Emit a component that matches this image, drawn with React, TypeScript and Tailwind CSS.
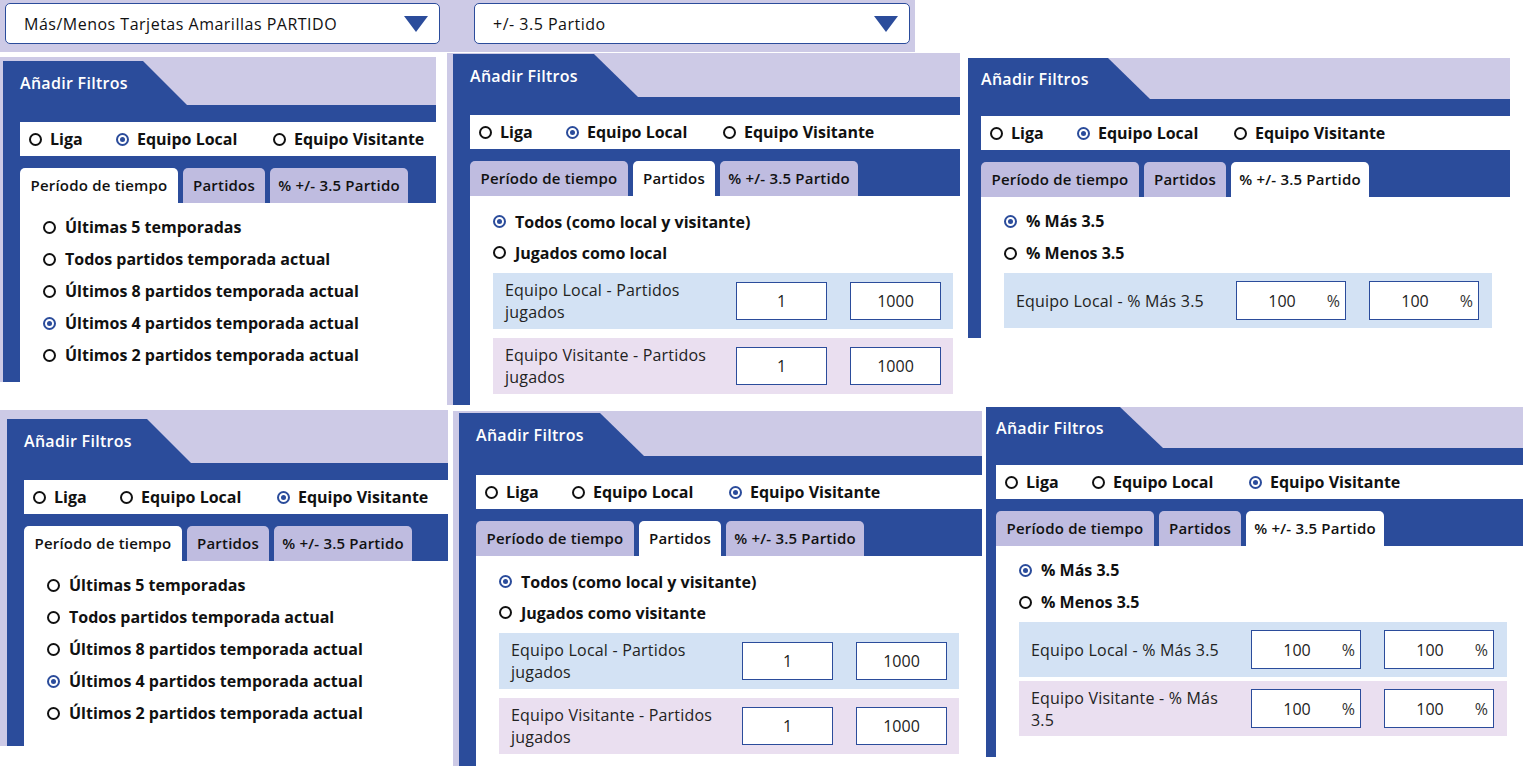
import React from 'react';

type Scope = 'liga' | 'local' | 'visit';
type Tab = 'periodo' | 'partidos' | 'pct';

interface PanelCfg {
  pos: string;
  size: string;
  header: string;
  clip: string;
  strip: string;
  band: string;
  scope: Scope;
  tab: Tab;
  visitante?: boolean;
  wide?: boolean;
}

const PANELS: PanelCfg[] = [
  {
    pos: 'left-[0px] top-[57px] pl-[3px] pt-[4px] bg-[#cdcae6]',
    size: 'w-[433px] h-[321px]',
    header: 'h-[44px]',
    clip: '[clip-path:polygon(0_0,140px_0,184px_100%,0_100%)]',
    strip: 'pl-[17px]',
    band: 'pt-[17px]',
    scope: 'local',
    tab: 'periodo',
  },
  {
    pos: 'left-[447px] top-[53px] pl-[6px] pt-[1px] bg-[#cdcae6]',
    size: 'w-[507px] h-[351px]',
    header: 'h-[43px]',
    clip: '[clip-path:polygon(0_0,141px_0,185px_100%,0_100%)]',
    strip: 'pl-[17px]',
    band: 'pt-[18px]',
    scope: 'local',
    tab: 'partidos',
  },
  {
    pos: 'left-[968px] top-[58px]',
    size: 'w-[542px] h-[280px]',
    header: 'h-[41px]',
    clip: '[clip-path:polygon(0_0,140px_0,182px_100%,0_100%)]',
    strip: 'pl-[13px]',
    band: 'pt-[17px]',
    scope: 'local',
    tab: 'pct',
    wide: true,
  },
  {
    pos: 'left-[0px] top-[410px] pl-[7px] pt-[9px] bg-[#cdcae6]',
    size: 'w-[441px] h-[327px]',
    header: 'h-[44px]',
    clip: '[clip-path:polygon(0_0,140px_0,184px_100%,0_100%)]',
    strip: 'pl-[17px]',
    band: 'pt-[17px]',
    scope: 'visit',
    tab: 'periodo',
  },
  {
    pos: 'left-[453px] top-[411px] pl-[6px] pt-[2px] bg-[#cdcae6]',
    size: 'w-[523px] h-[353px]',
    header: 'h-[43px]',
    clip: '[clip-path:polygon(0_0,141px_0,185px_100%,0_100%)]',
    strip: 'pl-[17px]',
    band: 'pt-[19px]',
    scope: 'visit',
    tab: 'partidos',
    visitante: true,
  },
  {
    pos: 'left-[986px] top-[407px]',
    size: 'w-[537px] h-[350px]',
    header: 'h-[41px]',
    clip: '[clip-path:polygon(0_0,134px_0,177px_100%,0_100%)]',
    strip: 'pl-[10px]',
    band: 'pt-[17px]',
    scope: 'visit',
    tab: 'pct',
    visitante: true,
    wide: true,
  },
];

const PERIODOS = [
  'Últimas 5 temporadas',
  'Todos partidos temporada actual',
  'Últimos 8 partidos temporada actual',
  'Últimos 4 partidos temporada actual',
  'Últimos 2 partidos temporada actual',
];

function Dot({ on }: { on?: boolean }) {
  if (on) {
    return (
      <span className="flex h-[13px] w-[13px] shrink-0 items-center justify-center rounded-full border-2 border-[#2b4c9b]">
        <span className="h-[5px] w-[5px] rounded-full bg-[#2b4c9b]" />
      </span>
    );
  }
  return <span className="h-[13px] w-[13px] shrink-0 rounded-full border-2 border-[#111]" />;
}

function Select({ width, text }: { width: string; text: string }) {
  return (
    <div
      className={`flex h-[41px] items-center justify-between rounded-[5px] border-[1.5px] border-[#2b4c9b] bg-white pl-[18px] pr-[11px] ${width}`}
    >
      <span className="text-[16px] font-medium tracking-[0.5px] text-[#111]">{text}</span>
      <svg width="24" height="16" viewBox="0 0 24 16">
        <polygon points="0,0 24,0 12,16" fill="#2b4c9b" />
      </svg>
    </div>
  );
}

function FieldRow({
  lines,
  pink,
  wide,
  pct,
  a,
  b,
}: {
  lines: string[];
  pink?: boolean;
  wide?: boolean;
  pct?: boolean;
  a: string;
  b: string;
}) {
  const box = wide ? 'w-[110px] h-[39px]' : 'w-[91px] h-[38px]';
  return (
    <div
      className={`flex items-center justify-between pl-[12px] ${wide ? 'w-[488px] h-[55px] pr-[13px]' : 'w-[460px] h-[56px] pr-[12px]'} ${pink ? 'bg-[#eadff0]' : 'bg-[#d3e2f4]'}`}
    >
      <div className="whitespace-nowrap text-[16px] leading-[22px] tracking-[0.2px] text-[#222]">
        {lines.map((l) => (
          <div key={l}>{l}</div>
        ))}
      </div>
      <div className="flex gap-[23px]">
        {[a, b].map((v, i) => (
          <div
            key={i}
            className={`relative flex items-center justify-center border border-[#2b4c9b] bg-white text-[16px] text-[#222] ${box} ${pct ? 'pr-[18px]' : ''}`}
          >
            {v}
            {pct && <span className="absolute right-[5px] text-[16px] text-[#333]">%</span>}
          </div>
        ))}
      </div>
    </div>
  );
}

const ITEM = 'flex items-center gap-[9px] text-[16px] font-bold text-[#111]';

function Content({ cfg }: { cfg: PanelCfg }) {
  if (cfg.tab === 'periodo') {
    return (
      <div className="flex flex-col pt-[8px]">
        {PERIODOS.map((p, i) => (
          <div key={p} className={`h-[32px] ${ITEM}`}>
            <Dot on={i === 3} />
            {p}
          </div>
        ))}
      </div>
    );
  }
  if (cfg.tab === 'partidos') {
    return (
      <div className="flex flex-col pt-[10px]">
        <div className={`h-[31px] ${ITEM}`}>
          <Dot on />
          Todos (como local y visitante)
        </div>
        <div className={`h-[31px] ${ITEM}`}>
          <Dot />
          {cfg.visitante ? 'Jugados como visitante' : 'Jugados como local'}
        </div>
        <div className="mt-[5px] flex flex-col gap-[9px]">
          <FieldRow lines={['Equipo Local - Partidos', 'jugados']} a="1" b="1000" />
          <FieldRow lines={['Equipo Visitante - Partidos', 'jugados']} pink a="1" b="1000" />
        </div>
      </div>
    );
  }
  return (
    <div className="flex flex-col pt-[8px]">
      <div className={`h-[32px] ${ITEM}`}>
        <Dot on />
        % Más 3.5
      </div>
      <div className={`h-[32px] ${ITEM}`}>
        <Dot />
        % Menos 3.5
      </div>
      <div className="mt-[4px] flex flex-col gap-[4px]">
        <FieldRow lines={['Equipo Local - % Más 3.5']} wide pct a="100" b="100" />
        {cfg.visitante && (
          <FieldRow lines={['Equipo Visitante - % Más', '3.5']} wide pct pink a="100" b="100" />
        )}
      </div>
    </div>
  );
}

function Panel({ cfg }: { cfg: PanelCfg }) {
  const scopes: { key: Scope; label: string; w: string }[] = [
    { key: 'liga', label: 'Liga', w: 'w-[87px]' },
    { key: 'local', label: 'Equipo Local', w: 'w-[157px]' },
    { key: 'visit', label: 'Equipo Visitante', w: '' },
  ];
  const tabs: { key: Tab; label: string; w: string }[] = [
    { key: 'periodo', label: 'Período de tiempo', w: 'w-[158px]' },
    { key: 'partidos', label: 'Partidos', w: 'w-[82px]' },
    { key: 'pct', label: '% +/- 3.5 Partido', w: 'w-[138px]' },
  ];
  return (
    <div className={`absolute ${cfg.pos}`}>
      <div className={`flex flex-col bg-[#2b4c9b] ${cfg.size}`}>
        {/* header tab */}
        <div className={`relative flex shrink-0 items-center bg-[#cdcae6] ${cfg.header} ${cfg.strip}`}>
          <div className={`absolute inset-0 bg-[#2b4c9b] ${cfg.clip}`} />
          <span className="relative text-[16px] font-semibold tracking-[0.3px] text-white">Añadir Filtros</span>
        </div>

        <div className={`flex flex-1 flex-col ${cfg.strip} ${cfg.band}`}>
          {/* scope radios */}
          <div className="flex h-[34px] shrink-0 items-center bg-white pl-[9px]">
            {scopes.map((s) => (
              <div key={s.key} className={`flex items-center gap-[8px] text-[16px] font-bold text-[#111] ${s.w}`}>
                <Dot on={cfg.scope === s.key} />
                {s.label}
              </div>
            ))}
          </div>

          {/* tabs */}
          <div className="flex shrink-0 gap-[5px] pt-[12px]">
            {tabs.map((t) => (
              <div
                key={t.key}
                className={`flex h-[35px] items-center justify-center whitespace-nowrap rounded-t-[5px] text-[15px] font-semibold tracking-[0.2px] text-[#111] ${t.w} ${cfg.tab === t.key ? 'bg-white' : 'bg-[#bfbce0]'}`}
              >
                {t.label}
              </div>
            ))}
          </div>

          <div className="flex-1 bg-white pl-[23px]">
            <Content cfg={cfg} />
          </div>
        </div>
      </div>
    </div>
  );
}

export default function App() {
  return (
    <div className="relative h-[781px] w-[1528px] overflow-hidden bg-white font-['Open_Sans',sans-serif]">
      <div className="absolute left-0 top-0 flex h-[52px] w-[915px] gap-[34px] bg-[#cdcae6] pl-[5px] pt-[3px]">
        <Select width="w-[435px]" text="Más/Menos Tarjetas Amarillas PARTIDO" />
        <Select width="w-[436px]" text="+/- 3.5 Partido" />
      </div>
      {PANELS.map((p, i) => (
        <Panel key={i} cfg={p} />
      ))}
    </div>
  );
}
